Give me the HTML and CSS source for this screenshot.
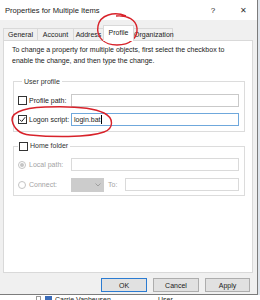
FILE: index.html
```html
<!DOCTYPE html>
<html lang="en">
<head>
  <meta charset="UTF-8" />
  <title>Properties for Multiple Items</title>
  <link rel="stylesheet" href="styles.css">
</head>
<body>

  <div class="dialog">
    <div class="titlebar">
      <span class="title">Properties for Multiple Items</span>
      <span class="help">?</span>
      <span class="close">✕</span>
    </div>

    <div class="tabs">
      <div class="tab t-general">General</div>
      <div class="tab t-account">Account</div>
      <div class="tab t-address">Address</div>
      <div class="tab t-profile active">Profile</div>
      <div class="tab t-org">Organization</div>
    </div>

    <div class="panel">
      <p class="intro">To change a property for multiple objects, first select the checkbox to<br>enable the change, and then type the change.</p>

      <fieldset class="group">
        <legend>User profile</legend>
        <div class="row">
          <label class="check"><span class="box"></span>Profile path:</label>
          <span class="field"></span>
        </div>
        <div class="row">
          <label class="check"><span class="box">
            <svg width="7" height="7" viewBox="0 0 7 7"><path d="M0.8 3.6 L2.7 5.5 L6.2 1.2" fill="none" stroke="#222" stroke-width="1"/></svg>
          </span>Logon script:</label>
          <span class="field focus">login.bat<span class="caret"></span></span>
        </div>
      </fieldset>

      <fieldset class="group second">
        <legend><span class="box"></span>Home folder</legend>
        <div class="row">
          <label class="radio off"><span class="dot on"></span>Local path:</label>
          <span class="field off"></span>
        </div>
        <div class="row">
          <label class="radio off"><span class="dot"></span>Connect:</label>
          <span class="combo">
            <svg width="6" height="4" viewBox="0 0 6 4"><path d="M0.5 0.5 L3 3 L5.5 0.5" fill="none" stroke="#9a9a9a" stroke-width="0.9"/></svg>
          </span>
          <span class="to">To:</span>
          <span class="field off short"></span>
        </div>
      </fieldset>
    </div>

    <div class="buttons">
      <button class="default">OK</button>
      <button>Cancel</button>
      <button class="apply">Apply</button>
    </div>
  </div>

  <div class="behind">
    <span class="mini-box"></span>
    <span class="user-icon"></span>
    <span class="name">Carrie Vanheusen</span>
    <span class="kind">User</span>
  </div>

  <svg class="marks" width="260" height="300" viewBox="0 0 260 300">
    <path d="M126 16 C114 11 100 15 98 26 C96 37 104 45 117 45 C130 45 138 38 137 28 C136 20 128 15 116 16" fill="none" stroke="#d8222a" stroke-width="1.4"/>
    <path d="M13 124 C8 113 22 108 45 107 C70 106 92 107 104 113 C114 118 114 128 104 132 C88 138 50 137 30 135 C20 134 14 130 12 120" fill="none" stroke="#d8222a" stroke-width="1.4"/>
  </svg>

</body>
</html>
```

FILE: styles.css
```css
* {
  box-sizing: border-box;
  margin: 0;
  padding: 0;
}

body {
  width: 260px;
  height: 300px;
  overflow: hidden;
  background: #dfe5ec;
  font-family: 'Liberation Sans', Arial, sans-serif;
  font-size: 7px;
  color: #1a1a1a;
  position: relative;
}

.dialog {
  width: 258px;
  height: 295px;
  background: #f0f0f0;
  border-right: 1px solid #7c7c7c;
  border-bottom: 1px solid #7c7c7c;
}

.titlebar {
  height: 20px;
  background: #ffffff;
  display: flex;
  align-items: center;
  padding-left: 5px;
  font-size: 7.6px;
}

.title {
  flex: 1;
}

.help {
  width: 10px;
  text-align: center;
  margin-right: 20px;
  font-size: 8px;
}

.close {
  width: 10px;
  text-align: center;
  margin-right: 9px;
  font-size: 8px;
  color: #333;
}

.tabs {
  display: flex;
  align-items: flex-end;
  padding: 0 0 0 3px;
  height: 20px;
}

.tab {
  height: 12px;
  line-height: 11px;
  text-align: center;
  border: 1px solid #d9d9d9;
  border-bottom: none;
  margin-right: -1px;
  background: #f0f0f0;
  color: #222;
}

.t-general { width: 35px; }
.t-account { width: 37px; }
.t-address { width: 31px; }
.t-profile { width: 31px; }
.t-org { width: 40px; }

.tab.active {
  height: 16px;
  line-height: 13px;
  background: #ffffff;
  position: relative;
  z-index: 1;
  margin-bottom: -1px;
}

.panel {
  margin-left: 3px;
  width: 250px;
  height: 233px;
  background: #ffffff;
  border: 1px solid #d9d9d9;
  padding: 3px 7px 0 9px;
}

.intro {
  line-height: 11px;
  margin-left: -1px;
}

.group {
  border: 1px solid #dcdcdc;
  margin-top: 11px;
  padding: 8px 5px 5px 4px;
}

.group legend {
  margin-left: 4px;
  padding: 0 2px;
  line-height: 9px;
  color: #333;
  display: flex;
  align-items: center;
}

.group.second {
  margin-top: 9px;
  padding-top: 7px;
  padding-bottom: 4px;
}

.group.second legend {
  margin-left: 0;
  padding: 0 2px 0 1px;
  line-height: 10px;
}

.row {
  display: flex;
  align-items: center;
  height: 13px;
}

.row + .row {
  margin-top: 6px;
}

.group.second .row + .row {
  margin-top: 7px;
}

.check,
.radio {
  width: 53px;
  display: flex;
  align-items: center;
  color: #222;
}

.radio.off {
  color: #a3a3a3;
}

.box {
  width: 9px;
  height: 9px;
  border: 1px solid #333;
  background: #fff;
  margin-right: 2px;
  display: flex;
  align-items: center;
  justify-content: center;
}

.dot {
  width: 8px;
  height: 8px;
  border: 1px solid #c4c4c4;
  border-radius: 50%;
  margin-right: 3px;
  display: flex;
  align-items: center;
  justify-content: center;
}

.dot.on::after {
  content: '';
  width: 4px;
  height: 4px;
  border-radius: 50%;
  background: #c4c4c4;
}

.field {
  flex: 1;
  height: 13px;
  border: 1px solid #c9c9c9;
  background: #fff;
  padding-left: 2px;
  line-height: 11px;
  display: flex;
  align-items: center;
}

.field.focus {
  border-color: #6fa8dc;
}

.field.off {
  border-color: #dadada;
}

.caret {
  width: 1px;
  height: 9px;
  background: #000;
  margin-left: 1px;
}

.combo {
  width: 33px;
  height: 14px;
  background: #cccccc;
  display: flex;
  align-items: center;
  justify-content: flex-end;
  padding-right: 3px;
}

.to {
  color: #a3a3a3;
  margin: 0 8px 0 4px;
}

.buttons {
  display: flex;
  justify-content: flex-end;
  gap: 6px;
  padding-right: 7px;
  margin-top: 5px;
}

.buttons button {
  width: 46px;
  height: 14px;
  background: #e1e1e1;
  border: 1px solid #adadad;
  font-family: 'Liberation Sans', Arial, sans-serif;
  font-size: 7px;
  color: #1a1a1a;
}

.buttons button.default {
  border-color: #2b7bd1;
}

.buttons button.apply {
  width: 45px;
}

.behind {
  height: 5px;
  background: #ffffff;
  display: flex;
  align-items: flex-start;
  padding-left: 36px;
  font-size: 7px;
  line-height: 9px;
  color: #222;
}

.mini-box {
  width: 5px;
  height: 5px;
  border: 1px solid #999;
  margin-top: 1px;
}

.user-icon {
  width: 7px;
  height: 6px;
  background: #3b6cb8;
  margin: 1px 3px 0 4px;
}

.name {
  width: 103px;
}

.marks {
  position: absolute;
  top: 0;
  left: 0;
  pointer-events: none;
}
```
